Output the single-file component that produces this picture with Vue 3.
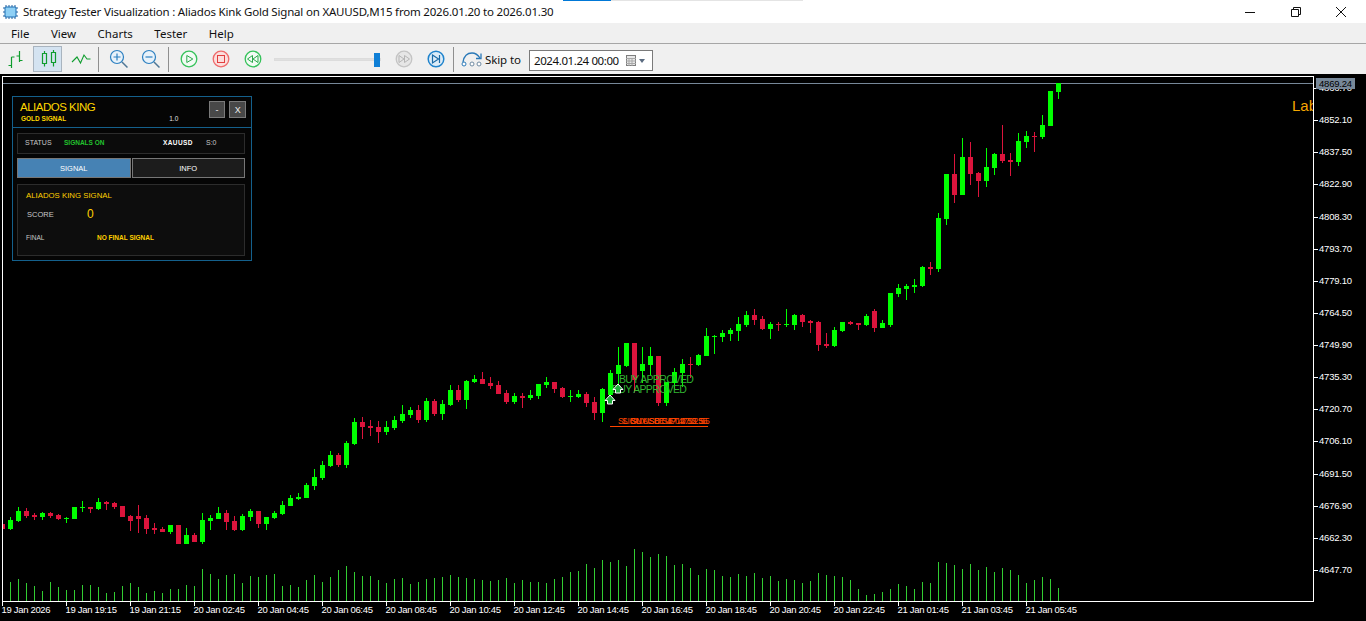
<template>
  <div class="window">
    <header class="titlebar">
      <svg class="app-icon" width="15" height="14" viewBox="0 0 15 14">
        <path d="M3 0v14M6 0v14M9 0v14M12 0v14M0 3h15M0 7h15M0 11h15" stroke="#1d5f9e" stroke-width="1" fill="none" />
        <rect x="2" y="2" width="11" height="10" rx="1" fill="#8fd0f5" stroke="#1d6fb4" />
      </svg>
      <span class="title-text">Strategy Tester Visualization : Aliados Kink Gold Signal on XAUUSD,M15 from 2026.01.20 to 2026.01.30</span>
      <div class="win-buttons">
        <button class="win-btn" type="button" aria-label="Minimize">
          <svg width="12" height="12" viewBox="0 0 12 12"><path d="M1 6.500h10" stroke="#111" fill="none" /></svg>
        </button>
        <button class="win-btn" type="button" aria-label="Restore">
          <svg width="12" height="12" viewBox="0 0 12 12"><path d="M1.500 3.500h7v7h-7zM3.500 3.500v-2h7v7h-2" stroke="#111" fill="none" /></svg>
        </button>
        <button class="win-btn" type="button" aria-label="Close">
          <svg width="12" height="12" viewBox="0 0 12 12"><path d="M1 1l10 10M11 1l-10 10" stroke="#111" fill="none" /></svg>
        </button>
      </div>
      <div class="tab-strip"><span class="tab-strip-blue"></span></div>
    </header>

    <nav class="menubar">
      <span v-for="item in menu" :key="item">{{ item }}</span>
    </nav>

    <div class="toolbar">
      <div class="tool-group first-group">
        <button class="tool-btn" type="button">
          <svg width="20" height="18" viewBox="0 0 20 18">
            <path d="M5.500 7v11M2.500 15.500h3M5.500 7h3M13.500 1v11M10.500 6h3M13.500 10.500h3" stroke="#0f9d2e" stroke-width="1.200" fill="none" />
          </svg>
        </button>
        <button class="tool-btn active" type="button">
          <svg width="18" height="18" viewBox="0 0 18 18">
            <path d="M3.500 3.500h4v10h-4zM12.500 2.500h4v10h-4zM5.500 1v2.500M5.500 13.500v3M14.500 0v2.500M14.500 12.500v4" stroke="#0f9d2e" stroke-width="1.200" fill="none" />
          </svg>
        </button>
        <button class="tool-btn" type="button">
          <svg class="line-icon" width="20" height="18" viewBox="0 0 20 18">
            <path d="M1 12l5-5 3.500 6 3.500-8 3 4h3.500" stroke="#0f9d2e" stroke-width="1.100" fill="none" />
          </svg>
        </button>
      </div>
      <i class="sep"></i>
      <div class="tool-group">
        <button class="tool-btn" type="button">
          <svg width="20" height="20" viewBox="0 0 20 20">
            <circle cx="8" cy="8" r="6.500" stroke="#2b7fc0" stroke-width="1.200" fill="#e8f2fa" />
            <path d="M4.500 8h7M8 4.500v7" stroke="#2b7fc0" stroke-width="1.200" fill="none" />
            <path d="M13 13l5.500 5.500" stroke="#4f7795" stroke-width="1.500" fill="none" />
          </svg>
        </button>
        <button class="tool-btn" type="button">
          <svg width="20" height="20" viewBox="0 0 20 20">
            <circle cx="8" cy="8" r="6.500" stroke="#2b7fc0" stroke-width="1.200" fill="#e8f2fa" />
            <path d="M4.500 8h7" stroke="#2b7fc0" stroke-width="1.200" fill="none" />
            <path d="M13 13l5.500 5.500" stroke="#4f7795" stroke-width="1.500" fill="none" />
          </svg>
        </button>
      </div>
      <i class="sep"></i>
      <div class="tool-group">
        <button class="tool-btn" type="button">
          <svg width="18" height="18" viewBox="0 0 18 18">
            <circle cx="9" cy="9" r="7.800" stroke="#35c25a" stroke-width="1.300" fill="#f2fbf4" />
            <path d="M6.800 5.500l6 3.500-6 3.500z" stroke="#2aa84b" fill="none" />
          </svg>
        </button>
        <button class="tool-btn" type="button">
          <svg width="18" height="18" viewBox="0 0 18 18">
            <circle cx="9" cy="9" r="7.800" stroke="#ef6a6a" stroke-width="1.300" fill="#fbdedd" />
            <rect x="5.500" y="5.500" width="7" height="7" stroke="#e23e3e" fill="none" />
          </svg>
        </button>
        <button class="tool-btn" type="button">
          <svg width="18" height="18" viewBox="0 0 18 18">
            <circle cx="9" cy="9" r="7.800" stroke="#35c25a" stroke-width="1.300" fill="#f2fbf4" />
            <path d="M8.500 5.500l-5 3.500 5 3.500zM14 5.500l-5 3.500 5 3.500z" stroke="#2aa84b" fill="none" />
          </svg>
        </button>
      </div>
      <div class="slider"><span class="slider-thumb"></span></div>
      <div class="tool-group">
        <button class="tool-btn" type="button">
          <svg width="18" height="18" viewBox="0 0 18 18">
            <circle cx="9" cy="9" r="7.800" stroke="#c4c4c4" stroke-width="1.300" fill="#e6e6e6" />
            <path d="M4 5.500l5 3.500-5 3.500zM9.500 5.500l5 3.500-5 3.500z" stroke="#b5b5b5" fill="none" />
          </svg>
        </button>
        <button class="tool-btn" type="button">
          <svg width="18" height="18" viewBox="0 0 18 18">
            <circle cx="9" cy="9" r="7.800" stroke="#1f83cc" stroke-width="1.500" fill="#dcecf8" />
            <path d="M5.500 5l6 4-6 4zM12.500 5v8" stroke="#1a6aa6" stroke-width="1.200" fill="none" />
          </svg>
        </button>
      </div>
      <i class="sep"></i>
      <svg class="skip-icon" width="24" height="20" viewBox="0 0 24 20">
        <path d="M4 13c1-6 4-9 9-9 4 0 6 2 8 5" stroke="#2a79b8" stroke-width="1.300" fill="none" />
        <path d="M22 4.500v5h-5" stroke="#2a79b8" stroke-width="1.300" fill="none" />
        <circle cx="5" cy="15" r="2" stroke="#2a79b8" fill="#fff" />
        <circle cx="13" cy="15" r="2" stroke="#6f8ba3" fill="#fff" />
        <circle cx="20" cy="15" r="2" stroke="#6f8ba3" fill="#fff" />
      </svg>
      <span class="skip-label">Skip to</span>
      <div class="date-field">
        <span>2024.01.24 00:00</span>
        <svg width="20" height="12" viewBox="0 0 20 12">
          <rect x="0.500" y="0.500" width="9" height="10" fill="#e8e8e8" stroke="#7d7d7d" />
          <path d="M0 3.500h10M3 3v8M6 3v8M0 6h10M0 8.500h10" stroke="#a8a8a8" fill="none" />
          <path d="M13 4h6l-3 4z" fill="#5a6b80" />
        </svg>
      </div>
    </div>

    <main class="chart">
      <svg class="chart-svg" width="1366" height="547" viewBox="0 74 1366 547">
        <defs>
          <clipPath id="plot"><rect x="3" y="77" width="1310" height="524" /></clipPath>
        </defs>

        <g clip-path="url(#plot)">
          <rect x="3" y="83" width="1310" height="1" fill="#778899" />
          <g shape-rendering="crispEdges">
            <rect v-for="(top, i) in volumes" :key="'v' + i" :x="2 + i * 8" :y="top" width="1" :height="601 - top" fill="#32cd32" />
            <g v-for="(c, i) in candles" :key="'c' + i" :fill="c[4] ? '#00ff00' : '#dc143c'">
              <rect :x="2 + i * 8" :y="c[0]" width="1" :height="c[3] - c[0]" />
              <rect :x="i * 8" :y="c[1]" width="5" :height="c[2] - c[1]" />
            </g>
          </g>

          <text class="note" x="619" y="383">BUY APPROVED</text>
          <text class="note" x="612" y="393">BUY APPROVED</text>
          <path v-for="a in arrows" :key="a[0]" :transform="`translate(${a[0]} ${a[1]})`" d="M0-5L5 0.500H2.500V4H-2.500V0.500H-5Z" fill="#1fae3c" stroke="#fff" stroke-width="1" />

          <text class="levels" x="618" y="424">SL BUY SETUP 4712.55</text>
          <text class="levels" x="622" y="424">SIGNAL BE 4712.55 S</text>
          <text class="levels" x="631" y="424">SL USD SET 4712.55</text>
          <rect x="610" y="426" width="98" height="1" fill="#ff4500" />

          <text class="corner-label" x="1292" y="111">Label</text>
        </g>

        <path d="M2.500 76.500H1313.500V601.500H2.500Z" fill="none" stroke="#fff" shape-rendering="crispEdges" />

        <g v-for="(p, i) in prices" :key="p">
          <rect x="1314" :y="priceY(i)" width="4" height="1" fill="#fff" />
          <text class="axis price" x="1319" :y="priceY(i) + 3">{{ p }}</text>
        </g>
        <rect x="1316" y="78" width="39" height="11" fill="#778899" />
        <text class="axis price bid" x="1319" y="87">4869.24</text>

        <g v-for="(t, i) in times" :key="t">
          <rect :x="2 + i * 64" y="602" width="1" height="4" fill="#fff" />
          <text class="axis time" :x="1.500 + i * 64" y="613">{{ t }}</text>
        </g>
      </svg>

      <section class="panel">
        <div class="panel-head">
          <div class="brand">
            <div class="brand-name">ALIADOS KING</div>
            <div class="brand-sub">GOLD SIGNAL</div>
          </div>
          <span class="version">1.0</span>
          <button class="head-btn" type="button">-</button>
          <button class="head-btn" type="button">X</button>
        </div>

        <div class="status-row">
          <span class="status-key">STATUS</span>
          <span class="status-on">SIGNALS ON</span>
          <span class="status-symbol">XAUUSD</span>
          <span class="status-spread">S:0</span>
        </div>

        <div class="tabs">
          <button class="tab tab-on" type="button">SIGNAL</button>
          <button class="tab" type="button">INFO</button>
        </div>

        <div class="signal-box">
          <div class="signal-title">ALIADOS KING SIGNAL</div>
          <div class="score-row">
            <span class="score-key">SCORE</span>
            <span class="score-value">0</span>
          </div>
          <div class="final-row">
            <span class="final-key">FINAL</span>
            <span class="final-value">NO FINAL SIGNAL</span>
          </div>
        </div>
      </section>
    </main>
  </div>
</template>

<script setup>
const menu = ['File', 'View', 'Charts', 'Tester', 'Help']

const prices = ['4866.70', '4852.10', '4837.50', '4822.90', '4808.30', '4793.70', '4779.10', '4764.50', '4749.90', '4735.30', '4720.70', '4706.10', '4691.50', '4676.90', '4662.30', '4647.70']
const priceY = (i) => Math.round(88 + i * 32.13)

const times = ['19 Jan 2026', '19 Jan 19:15', '19 Jan 21:15', '20 Jan 02:45', '20 Jan 04:45', '20 Jan 06:45', '20 Jan 08:45', '20 Jan 10:45', '20 Jan 12:45', '20 Jan 14:45', '20 Jan 16:45', '20 Jan 18:45', '20 Jan 20:45', '20 Jan 22:45', '21 Jan 01:45', '21 Jan 03:45', '21 Jan 05:45']

const arrows = [[610, 400], [618, 389]]

// high, body top, body bottom, low, 1 = bull (all in screen pixels)
const candles = [
  [524, 524, 529, 529, 0], [517, 520, 529, 530, 1], [507, 511, 521, 522, 1], [508, 511, 516, 518, 0],
  [513, 515, 517, 520, 0], [512, 513, 517, 520, 1], [512, 513, 516, 518, 0], [514, 515, 519, 520, 0],
  [517, 518, 519, 523, 1], [507, 507, 519, 519, 1], [501, 507, 508, 512, 1], [507, 507, 509, 513, 0],
  [498, 502, 509, 510, 1], [501, 502, 504, 510, 0], [502, 503, 507, 509, 0], [506, 506, 517, 517, 0],
  [515, 516, 521, 531, 0], [505, 516, 519, 533, 0], [515, 518, 529, 534, 0], [523, 528, 530, 534, 0],
  [527, 529, 532, 532, 0], [525, 525, 532, 534, 1], [525, 525, 544, 544, 0], [528, 535, 544, 544, 1],
  [533, 535, 542, 542, 0], [513, 520, 542, 544, 1], [515, 518, 521, 530, 1], [507, 513, 519, 519, 1],
  [510, 513, 522, 530, 0], [516, 521, 530, 531, 0], [514, 516, 530, 531, 1], [509, 511, 517, 521, 1],
  [511, 511, 524, 528, 0], [517, 517, 524, 530, 1], [511, 513, 518, 519, 1], [501, 505, 514, 515, 1],
  [495, 498, 506, 506, 1], [493, 497, 499, 500, 1], [483, 485, 498, 498, 1], [469, 477, 486, 490, 1],
  [461, 465, 478, 480, 1], [451, 455, 466, 467, 1], [453, 455, 465, 467, 0], [441, 443, 465, 468, 1],
  [418, 422, 444, 445, 1], [417, 422, 427, 439, 0], [420, 426, 428, 436, 0], [421, 427, 432, 443, 0],
  [421, 427, 432, 435, 1], [416, 420, 428, 430, 1], [405, 414, 421, 423, 1], [407, 410, 415, 418, 1],
  [405, 410, 420, 423, 0], [398, 401, 420, 422, 1], [399, 401, 414, 416, 0], [400, 404, 414, 420, 1],
  [385, 390, 405, 406, 1], [385, 390, 400, 402, 0], [380, 381, 400, 409, 1], [375, 379, 382, 383, 1],
  [372, 379, 384, 384, 0], [377, 383, 386, 389, 0], [381, 385, 394, 394, 0], [390, 393, 402, 404, 0],
  [393, 396, 402, 404, 1], [393, 396, 398, 408, 0], [390, 395, 398, 400, 1], [384, 384, 396, 399, 1],
  [377, 382, 385, 388, 1], [382, 382, 389, 393, 0], [387, 388, 397, 398, 0], [390, 396, 397, 402, 1],
  [390, 394, 397, 398, 1], [392, 394, 403, 407, 0], [397, 402, 413, 420, 0], [388, 389, 413, 422, 1],
  [370, 373, 395, 395, 1], [347, 365, 374, 385, 1], [343, 343, 366, 367, 1], [343, 343, 380, 393, 0],
  [347, 364, 371, 383, 1], [347, 356, 365, 375, 1], [356, 356, 403, 406, 0], [382, 382, 403, 406, 1],
  [368, 372, 383, 390, 1], [359, 364, 373, 387, 1], [357, 364, 365, 378, 0], [354, 355, 365, 366, 1],
  [328, 336, 356, 356, 1], [335, 336, 337, 354, 1], [330, 333, 337, 342, 1], [328, 330, 334, 341, 1],
  [317, 324, 331, 341, 1], [311, 315, 325, 327, 1], [309, 315, 320, 325, 0], [316, 319, 329, 330, 0],
  [322, 324, 329, 339, 1], [322, 324, 325, 331, 0], [309, 324, 325, 327, 1], [314, 315, 325, 330, 1],
  [314, 315, 322, 327, 0], [320, 321, 323, 333, 0], [321, 322, 345, 351, 0], [333, 344, 346, 348, 0],
  [327, 330, 346, 347, 1], [322, 322, 331, 332, 1], [321, 322, 324, 325, 0], [323, 323, 325, 330, 0],
  [314, 316, 325, 326, 1], [309, 311, 328, 332, 0], [320, 323, 328, 328, 1], [293, 293, 325, 327, 1],
  [284, 288, 294, 297, 1], [284, 286, 289, 300, 1], [279, 285, 287, 293, 1], [266, 267, 286, 287, 1],
  [262, 267, 269, 275, 0], [213, 218, 269, 272, 1], [174, 174, 219, 225, 1], [154, 174, 195, 203, 0],
  [138, 157, 195, 195, 1], [142, 157, 174, 185, 0], [172, 173, 181, 197, 0], [148, 167, 181, 187, 1],
  [153, 154, 168, 175, 1], [125, 154, 161, 163, 0], [153, 160, 162, 176, 0], [133, 141, 162, 166, 1],
  [131, 136, 142, 148, 1], [132, 136, 137, 152, 0], [115, 125, 137, 139, 1], [91, 91, 126, 126, 1],
  [83, 83, 92, 99, 1]
]

// top of each volume bar, one per candle
const volumes = [
  601, 582, 579, 583, 586, 591, 582, 587, 590, 590, 585, 585, 587, 593, 592, 586, 583, 587, 593, 591,
  593, 589, 589, 585, 586, 569, 574, 579, 575, 574, 583, 576, 577, 575, 574, 586, 585, 587, 580, 575,
  582, 577, 570, 566, 572, 576, 576, 580, 583, 579, 578, 584, 582, 579, 578, 577, 575, 577, 578, 579,
  580, 581, 580, 578, 583, 580, 582, 582, 583, 579, 577, 572, 571, 564, 568, 560, 562, 560, 566, 549,
  552, 557, 554, 556, 565, 564, 568, 575, 569, 570, 576, 577, 574, 576, 573, 578, 576, 581, 579, 580,
  583, 581, 573, 575, 576, 577, 580, 589, 595, 594, 592, 589, 584, 586, 589, 582, 583, 562, 563, 565,
  569, 564, 570, 567, 572, 568, 570, 575, 583, 580, 577, 579, 588
]
</script>

<style>
html,
body {
  margin: 0;
  background: #000;
}
</style>

<style scoped>
.window {
  width: 1366px;
  height: 621px;
  overflow: hidden;
  display: flex;
  flex-direction: column;
  font-family: "Noto Sans", "Liberation Sans", sans-serif;
  color: #111;
}

.titlebar {
  position: relative;
  height: 23px;
  flex: none;
  display: flex;
  align-items: center;
  background: #fff;
  padding-left: 3px;
}

.app-icon {
  margin-right: 5px;
}

.title-text {
  font-size: 11.500px;
  letter-spacing: -0.19px;
  white-space: nowrap;
}

.win-buttons {
  margin-left: auto;
  display: flex;
  padding-right: 2px;
}

.win-btn {
  width: 45.500px;
  height: 23px;
  border: none;
  padding: 0;
  background: transparent;
  display: flex;
  align-items: center;
  justify-content: center;
}

.tab-strip {
  position: absolute;
  left: 563px;
  top: 0;
  width: 240px;
  height: 1px;
  background: #e4e4e4;
}

.tab-strip-blue {
  display: block;
  width: 48px;
  height: 1px;
  background: #0078d7;
}

.menubar {
  height: 20px;
  flex: none;
  display: flex;
  align-items: center;
  gap: 21.500px;
  padding-left: 11px;
  background: #f0f0f0;
  border-bottom: 1px solid #a6a6a6;
  font-size: 11.500px;
}

.toolbar {
  height: 30px;
  flex: none;
  display: flex;
  align-items: center;
  padding-left: 1px;
  background: #f0f0f0;
  box-sizing: border-box;
}

.tool-group {
  display: flex;
  gap: 3px;
}

.first-group {
  margin-right: 1px;
}

.tool-btn {
  width: 29px;
  height: 26px;
  padding: 0;
  border: 1px solid transparent;
  background: transparent;
  box-sizing: border-box;
  display: flex;
  align-items: center;
  justify-content: center;
}

.tool-btn.active {
  background: #d4e3f1;
  border-color: #a9b4bf;
}

.line-icon {
  margin-left: 3px;
}

.sep {
  width: 1px;
  height: 25px;
  margin: 0 5px 0 3px;
  background: #8f8f8f;
}

.slider {
  position: relative;
  width: 107px;
  height: 3px;
  margin: 0 8px 0 7px;
  background: #e0e0e0;
  border: 1px solid #dcdcdc;
  box-sizing: border-box;
}

.slider-thumb {
  position: absolute;
  right: 0;
  top: -6px;
  width: 6px;
  height: 14px;
  background: #0f7fd6;
}

.skip-icon {
  flex: none;
}

.skip-label {
  width: 44px;
  margin-left: 2px;
  font-size: 11.500px;
  letter-spacing: -0.1px;
  white-space: nowrap;
}

.date-field {
  width: 124px;
  height: 21px;
  margin-top: 3px;
  padding: 0 6px 0 4px;
  box-sizing: border-box;
  display: flex;
  align-items: center;
  justify-content: space-between;
  background: #fff;
  border: 1px solid #7a7a7a;
  font-size: 11.500px;
  letter-spacing: -0.4px;
  white-space: nowrap;
}

.chart {
  position: relative;
  flex: 1;
  min-height: 0;
  background: #000;
}

.chart-svg {
  display: block;
  font-family: "Liberation Sans", sans-serif;
}

.axis {
  font-size: 9.500px;
  fill: #fff;
}

.price {
  letter-spacing: -0.2px;
}

.time {
  letter-spacing: -0.32px;
}

.axis.bid {
  fill: #000;
}

.note {
  font-size: 10.500px;
  letter-spacing: -0.65px;
  fill: #32b432;
}

.levels {
  font-size: 8.500px;
  letter-spacing: -0.2px;
  fill: #ff4500;
}

.corner-label {
  font-size: 15px;
  fill: #f5a800;
}

.panel {
  position: absolute;
  left: 12px;
  top: 22px;
  width: 240px;
  height: 165px;
  box-sizing: border-box;
  padding-bottom: 4px;
  display: flex;
  flex-direction: column;
  background: #050505;
  border: 1px solid #14608c;
  font-family: "Liberation Sans", sans-serif;
  color: #c8c8c8;
}

.panel-head {
  height: 31px;
  flex: none;
  display: flex;
  align-items: flex-start;
  gap: 4px;
  padding: 4px 5px 0 7px;
  box-sizing: border-box;
  border-bottom: 1px solid #14608c;
}

.brand-name {
  font-size: 11.500px;
  line-height: 13px;
  letter-spacing: -0.5px;
  color: #ffd700;
  white-space: nowrap;
}

.brand-sub {
  font-size: 6.500px;
  line-height: 9px;
  font-weight: 700;
  margin-left: 1px;
  color: #ffd700;
  white-space: nowrap;
}

.brand {
  width: 148px;
}

.version {
  width: 36px;
  padding-top: 13px;
  font-size: 6.500px;
  line-height: 9px;
  color: #e0e0e0;
}

.head-btn {
  width: 17px;
  height: 17px;
  padding: 0;
  background: #484848;
  border: 1px solid #7a7a7a;
  color: #eee;
  font-family: inherit;
  font-size: 9px;
  line-height: 14px;
}

.status-row {
  height: 21px;
  flex: none;
  margin: 5px 6px 0 4px;
  padding: 0 0 2px 7px;
  box-sizing: border-box;
  display: flex;
  align-items: center;
  background: #0b0b0b;
  border: 1px solid #2c2c2c;
  font-size: 7px;
  white-space: nowrap;
}

.status-key {
  width: 39px;
}

.status-on {
  width: 99px;
  font-size: 6.500px;
  color: #22c32e;
  font-weight: 700;
}

.status-symbol {
  width: 43px;
  font-size: 6.500px;
  letter-spacing: 0.4px;
  color: #fff;
  font-weight: 700;
}

.tabs {
  flex: none;
  display: flex;
  margin: 4px 6px 0 4px;
  gap: 1px;
}

.tab {
  flex: 1;
  height: 20px;
  padding: 0;
  background: #1c1c1c;
  border: 1px solid #777;
  color: #fff;
  font-family: inherit;
  font-size: 7.500px;
}

.tab-on {
  background: #4682b4;
}

.signal-box {
  flex: 1;
  margin: 6px 6px 0 4px;
  padding: 6px 8px 0;
  box-sizing: border-box;
  background: #0d0d0d;
  border: 1px solid #2c2c2c;
  white-space: nowrap;
}

.signal-title {
  font-size: 7.800px;
  line-height: 10px;
  color: #ffd000;
}

.score-row {
  display: flex;
  align-items: center;
  height: 14px;
  margin-top: 6px;
  padding-left: 1px;
  font-size: 7.500px;
}

.score-key {
  width: 60px;
}

.score-value {
  font-size: 12px;
  color: #ffd000;
}

.final-row {
  display: flex;
  align-items: center;
  margin-top: 13px;
  font-size: 6.500px;
}

.final-key {
  width: 71px;
}

.final-value {
  font-size: 6.500px;
  font-weight: 700;
  color: #ffd000;
}
</style>
